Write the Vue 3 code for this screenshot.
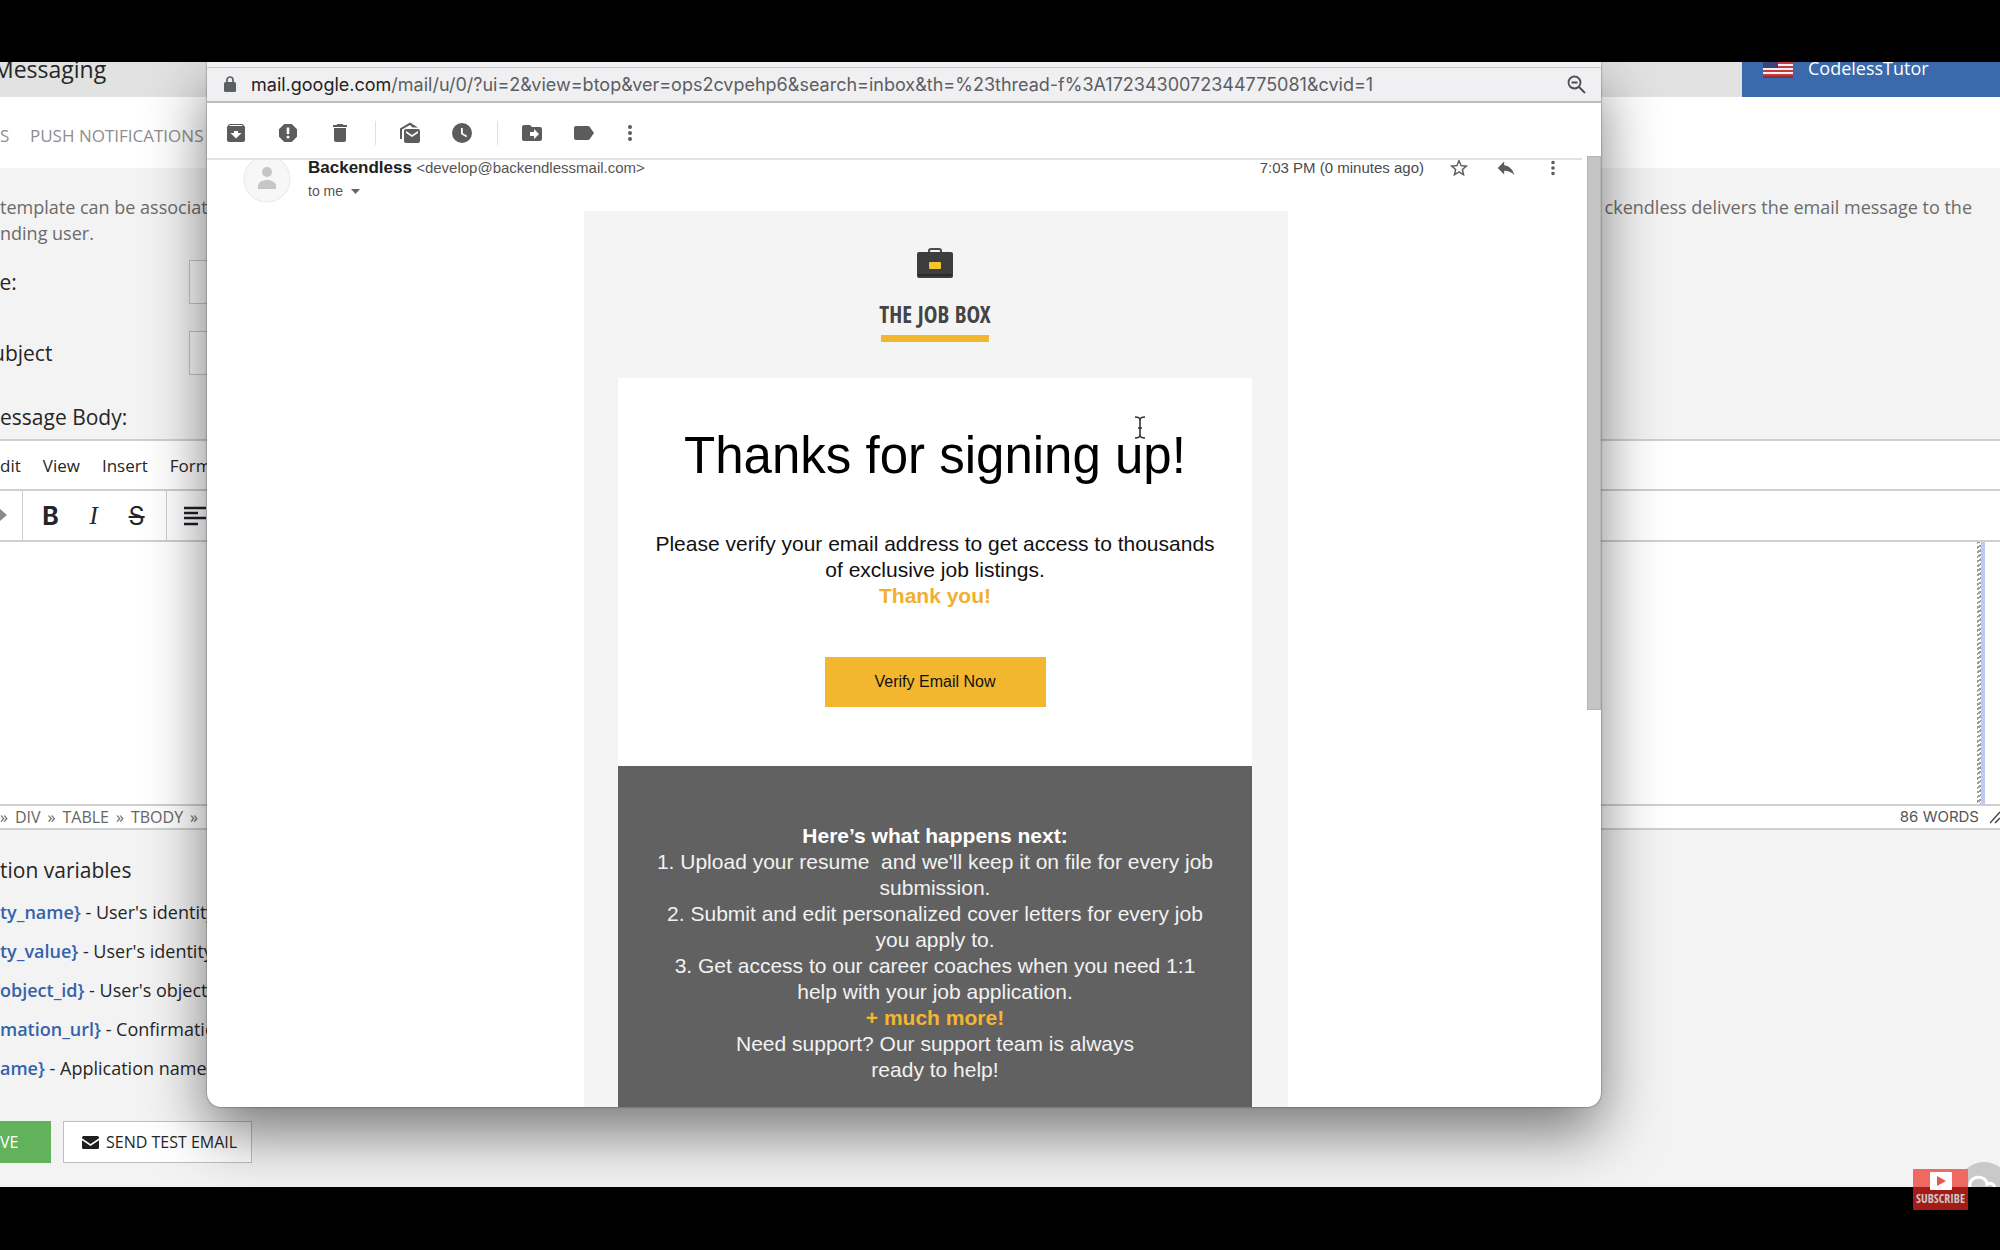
<template>
  <div class="screen">
    <main class="desktop">
      <div class="console">
        <header class="console-head">
          <h1 class="console-title">Messaging</h1>
          <a class="account" href="#">
            <svg class="flag" viewBox="0 0 30 20">
              <rect width="30" height="20" fill="#f4f1f2" />
              <path d="M0 1h30M0 5h30M0 9h30M0 13h30M0 17h30" stroke="#c8383f" stroke-width="2" />
              <rect y="18" width="30" height="2" fill="#8d2d3a" />
              <rect width="15" height="10" fill="#3c4377" />
            </svg>
            <span>CodelessTutor</span>
          </a>
        </header>

        <nav class="tabs">
          <a href="#">S</a>
          <a href="#">PUSH NOTIFICATIONS</a>
        </nav>

        <section class="form">
          <div class="intro">
            <p>template can be associat<br />nding user.</p>
            <p>ckendless delivers the email message to the</p>
          </div>
          <div class="field">
            <label for="template">te:</label>
            <input id="template" type="text" />
          </div>
          <div class="field">
            <label for="subject">ubject</label>
            <input id="subject" type="text" />
          </div>
          <h2 class="body-label">essage Body:</h2>
        </section>

        <section class="editor">
          <div class="menubar">
            <button v-for="m in menus" :key="m" type="button">{{ m }}</button>
          </div>
          <div class="format-bar">
            <div class="group group-undo">
              <button type="button" aria-label="Redo">
                <svg width="8" height="16" viewBox="0 0 8 16"><path d="M0 1l7 6-7 6z" fill="#8a8a8a" /></svg>
              </button>
            </div>
            <div class="group group-style">
              <button type="button" class="bold">B</button>
              <button type="button" class="italic">I</button>
              <button type="button" class="strike">S</button>
            </div>
            <div class="group group-align">
              <button type="button" aria-label="Align left">
                <svg width="24" height="20" viewBox="0 0 24 20">
                  <path d="M1 2h22M1 7h14M1 12h22M1 18h14" stroke="#1c1f27" stroke-width="2.6" />
                </svg>
              </button>
            </div>
          </div>
          <div class="canvas"><div class="guide"></div></div>
          <div class="statusbar">
            <template v-for="p in path" :key="p"><span>»</span><span>{{ p }}</span></template>
            <span>»</span>
            <span class="words">86 WORDS</span>
            <svg width="10" height="14" viewBox="0 0 10 14"><path d="M0 13L10 2M5 13l5-5" stroke="#444" stroke-width="1.5" /></svg>
          </div>
        </section>

        <section class="variables">
          <h2>tion variables</h2>
          <ul>
            <li v-for="v in variables" :key="v.name"><b>{{ v.name }}</b> - {{ v.text }}</li>
          </ul>
        </section>

        <footer class="actions">
          <button type="button" class="save">VE</button>
          <button type="button" class="test">
            <svg width="17" height="13" viewBox="0 0 17 13">
              <path d="M1.5 0h14A1.5 1.5 0 0 1 17 1.5v.8L8.5 8 0 2.300v-.8A1.5 1.5 0 0 1 1.500 0z M0 4.300L8.500 10 17 4.300v7.200a1.500 1.500 0 0 1-1.500 1.500h-14A1.500 1.500 0 0 1 0 11.500z" fill="#1f1f1f" />
            </svg>
            SEND TEST EMAIL
          </button>
        </footer>
      </div>

      <!-- floating mail window -->
      <div class="mail-window">
        <div class="address-bar">
          <svg class="lock" width="12" height="16" viewBox="0 0 12 16">
            <rect y="6" width="12" height="10" rx="1.5" fill="#5c5f63" />
            <path d="M3 7V4a3 3 0 0 1 6 0v3" fill="none" stroke="#5c5f63" stroke-width="1.7" />
          </svg>
          <div class="url"><b>mail.google.com</b>/mail/u/0/?ui=2&amp;view=btop&amp;ver=ops2cvpehp6&amp;search=inbox&amp;th=%23thread-f%3A1723430072344775081&amp;cvid=1</div>
          <button type="button" aria-label="Zoom">
            <svg width="19" height="19" viewBox="0 0 19 19" fill="none" stroke="#4c4f54" stroke-width="1.8">
              <circle cx="7.5" cy="7.5" r="6" />
              <path d="M12 12l6 6M4.500 7.500h6" />
            </svg>
          </button>
        </div>

        <div class="mail-tools">
          <template v-for="(t, i) in tools" :key="i">
            <span v-if="t.sep" class="sep"></span>
            <button v-else type="button" :aria-label="t.label">
              <svg viewBox="0 0 24 24"><path fill-rule="evenodd" :d="t.d" /></svg>
            </button>
          </template>
        </div>

        <div class="mail-scroll">
          <div class="mail-head">
            <svg class="avatar" viewBox="0 0 48 48">
              <circle cx="24" cy="24" r="23" fill="#f7f7f7" stroke="#e6e6e6" />
              <circle cx="24" cy="17" r="5" fill="#c6c6c6" />
              <path d="M15 34v-3c0-4 5-6 9-6s9 2 9 6v3z" fill="#c6c6c6" />
            </svg>
            <div class="sender">
              <div class="from"><b>Backendless</b> <span>&lt;develop@backendlessmail.com&gt;</span></div>
              <div class="to">to me <svg width="9" height="5" viewBox="0 0 9 5"><path d="M0 0h9L4.500 5z" fill="#666" /></svg></div>
            </div>
            <div class="time">7:03 PM (0 minutes ago)</div>
            <div class="head-icons">
              <button v-for="t in headTools" :key="t.label" type="button" :aria-label="t.label">
                <svg viewBox="0 0 24 24"><path fill-rule="evenodd" :d="t.d" /></svg>
              </button>
            </div>
          </div>

          <div class="mail-body">
            <article class="letter">
              <div class="brand">
                <svg width="36" height="30" viewBox="0 0 36 30">
                  <path d="M12 5V3a2 2 0 0 1 2-2h8a2 2 0 0 1 2 2v2" fill="none" stroke="#4a4a4c" stroke-width="2" />
                  <rect y="4" width="36" height="26" rx="2" fill="#3d3d3f" />
                  <path d="M1 27h34" stroke="#2a2a2c" stroke-width="2" />
                  <rect x="12" y="14" width="12" height="7" rx="1" fill="#f0c62c" />
                </svg>
                <div class="brand-name">THE JOB BOX</div>
                <div class="brand-line"></div>
              </div>
              <div class="card">
                <h2>Thanks for signing up!</h2>
                <p>Please verify your email address to get access to thousands<br />of exclusive job listings.</p>
                <strong>Thank you!</strong>
                <a class="verify" href="#">Verify Email Now</a>
              </div>
              <div class="next">
                <strong>Here’s what happens next:</strong>
                <p v-for="line in steps" :key="line">{{ line }}</p>
                <strong class="more">+ much more!</strong>
                <p>Need support? Our support team is always</p>
                <p>ready to help!</p>
              </div>
            </article>
          </div>
        </div>
        <div class="scrollbar"></div>
        <svg class="cursor" width="12" height="23" viewBox="0 0 12 23">
          <path d="M1 1c3 0 5 1 5 3v15c0 2-2 3-5 3M11 1c-3 0-5 1-5 3M11 22c-3 0-5-1-5-3M4 12h4" fill="none" stroke="#333" stroke-width="1.6" />
        </svg>
      </div>

      <svg class="chat" width="52" height="52" viewBox="0 0 52 52">
        <circle cx="26" cy="26" r="26" fill="#c9c9c9" />
        <path d="M12 25c-2-12 16-13 17-3 3-2 8 0 8 5" fill="none" stroke="#fff" stroke-width="3" />
      </svg>
    </main>

    <button type="button" class="subscribe">
      <svg width="22" height="18" viewBox="0 0 22 18">
        <rect width="22" height="18" rx="1" fill="#fff" />
        <path d="M7 4l9 5-9 5z" fill="#e8564f" />
      </svg>
      <span>SUBSCRIBE</span>
    </button>
  </div>
</template>

<script setup>
const menus = ['dit', 'View', 'Insert', 'Form']

const path = ['DIV', 'TABLE', 'TBODY']

const variables = [
  { name: 'ty_name}', text: "User's identity" },
  { name: 'ty_value}', text: "User's identity" },
  { name: 'object_id}', text: "User's object" },
  { name: 'mation_url}', text: 'Confirmation' },
  { name: 'ame}', text: 'Application name' }
]

const steps = [
  "1. Upload your resume\u00a0 and we'll keep it on file for every job",
  'submission.',
  '2. Submit and edit personalized cover letters for every job',
  'you apply to.',
  '3. Get access to our career coaches when you need 1:1',
  'help with your job application.'
]

const dots = 'M12 8a2 2 0 1 0 0-4 2 2 0 0 0 0 4zm0 2a2 2 0 1 0 0 4 2 2 0 0 0 0-4zm0 6a2 2 0 1 0 0 4 2 2 0 0 0 0-4z'

const tools = [
  { label: 'Archive', d: 'M20.540 5.230l-1.390-1.680A1.450 1.450 0 0 0 18 3H6c-.47 0-.88.210-1.160.550L3.460 5.230C3.170 5.570 3 6.020 3 6.500V19a2 2 0 0 0 2 2h14a2 2 0 0 0 2-2V6.500c0-.48-.17-.93-.46-1.270zM12 17.500L6.500 12H10v-2h4v2h3.500L12 17.500zM5.120 5l.81-1h12l.94 1H5.120z' },
  { label: 'Report spam', d: 'M15.730 3H8.270L3 8.270v7.460L8.270 21h7.460L21 15.730V8.270L15.730 3zM12 17.500a1.500 1.500 0 1 1 0-3 1.500 1.500 0 0 1 0 3zm1.300-4.500h-2.600V6.500h2.600V13z' },
  { label: 'Delete', d: 'M6 19a2 2 0 0 0 2 2h8a2 2 0 0 0 2-2V7H6v12zM19 4h-3.500l-1-1h-5l-1 1H5v2h14V4z' },
  { sep: true },
  { label: 'Mark as unread', d: 'M20 8H8a2 2 0 0 0-2 2v10c0 1.100.9 2 2 2h12a2 2 0 0 0 2-2V10a2 2 0 0 0-2-2zm0 4l-6 4-6-4v-2l6 4 6-4v2zM4 18H2V7.500L12 1.500 20 6.500H14.500L12 4 4 8.600z' },
  { label: 'Snooze', d: 'M12 2a10 10 0 1 0 0 20 10 10 0 0 0 0-20zm4.200 14.200L11 13V7h1.800v5.200l4.400 2.600-1 1.400z' },
  { sep: true },
  { label: 'Move to', d: 'M20 6h-8l-2-2H4a2 2 0 0 0-2 2v12c0 1.100.9 2 2 2h16a2 2 0 0 0 2-2V8a2 2 0 0 0-2-2zm-6 12v-3h-4v-4h4V8l5 5-5 5z' },
  { label: 'Labels', d: 'M17.630 5.840C17.270 5.330 16.670 5 16 5H4a2 2 0 0 0-2 2v10c0 1.100.9 2 2 2h12c.67 0 1.270-.33 1.630-.84L22 12l-4.370-6.160z' },
  { label: 'More', d: dots }
]

const headTools = [
  { label: 'Star', d: 'M22 9.240l-7.190-.62L12 2 9.190 8.630 2 9.240l5.460 4.730L5.820 21 12 17.270 18.180 21l-1.630-7.030L22 9.240zM12 15.400l-3.760 2.270 1-4.280-3.320-2.880 4.380-.38L12 6.100l1.710 4.040 4.380.38-3.320 2.880 1 4.280L12 15.400z' },
  { label: 'Reply', d: 'M10 9V5l-7 7 7 7v-4.100c5 0 8.500 1.600 11 5.100-1-5-4-10-11-11z' },
  { label: 'More options', d: dots }
]
</script>

<style>
body {
  margin: 0;
  background: #000;
}
</style>

<style scoped>
* {
  box-sizing: border-box;
}

h1, h2, p, ul {
  margin: 0;
  padding: 0;
  font-weight: 400;
}

button {
  border: 0;
  padding: 0;
  background: none;
  color: inherit;
  font: inherit;
}

a {
  color: inherit;
  text-decoration: none;
}

svg {
  display: block;
  flex-shrink: 0;
}

.screen {
  position: relative;
  padding: 62px 0 63px;
  background: #000;
  font-family: "Open Sans", "Noto Sans", sans-serif;
  color: #262626;
}

.desktop {
  position: relative;
  overflow: hidden;
  background: #f3f3f3;
}

.console-head {
  display: flex;
  justify-content: space-between;
  height: 35px;
  background: #e2e2e2;
  overflow: hidden;
}

.console-title {
  margin-left: -7px;
  font-size: 23px;
  line-height: 14px;
}

.account {
  display: flex;
  gap: 15px;
  width: 258px;
  padding-left: 21px;
  background: #3a69ac;
  color: #fff;
  font-size: 18px;
  line-height: 12px;
}

.flag {
  width: 30px;
  height: 20px;
  margin-top: -4px;
}

.tabs {
  display: flex;
  gap: 24px;
  align-items: center;
  height: 71px;
  padding-top: 6px;
  padding-left: 0;
  background: #fff;
  color: #8e8e8e;
  font-size: 17px;
}

.tabs a:first-child {
  width: 6px;
}

.form {
  height: 271px;
  padding-top: 26px;
}

.intro {
  display: flex;
  justify-content: space-between;
  height: 66px;
  padding-right: 28px;
  color: #6b6b6b;
  font-size: 18px;
  line-height: 26px;
}

.field {
  display: flex;
  align-items: center;
  height: 44px;
  margin-bottom: 27px;
  font-size: 21px;
}

.field label {
  width: 189px;
  text-indent: -8px;
}

.field input {
  width: 60%;
  height: 44px;
  border: 1px solid #c4c4c4;
  background: #f8f8f8;
}

.body-label {
  font-size: 21px;
  line-height: 30px;
}

.editor {
  border-top: 2px solid #cfcfcf;
  border-bottom: 2px solid #cfcfcf;
  background: #fff;
}

.menubar {
  display: flex;
  gap: 22px;
  height: 48px;
  font-size: 17px;
}

.format-bar {
  display: flex;
  height: 53px;
  border-top: 2px solid #cfcfcf;
  border-bottom: 2px solid #cfcfcf;
}

.group {
  display: flex;
  align-items: center;
  border-right: 1px solid #cfcfcf;
}

.group-undo {
  width: 23px;
}

.group-style {
  width: 144px;
  justify-content: space-around;
  padding: 0 6px 0 4px;
  font-size: 25px;
}

.group-align {
  padding-left: 16px;
  border-right: 0;
}

.bold {
  font-family: Inter, sans-serif;
  font-weight: 700;
}

.italic {
  font-family: "Liberation Serif", serif;
  font-style: italic;
}

.strike {
  font-family: Inter, sans-serif;
  text-decoration: line-through;
}

.canvas {
  display: flex;
  justify-content: flex-end;
  height: 262px;
  padding-right: 15px;
}

.guide {
  width: 8px;
  border-right: 4px solid #b9cdf3;
  background: repeating-linear-gradient(150deg, #9c9c9c 0 2px, #fff 2px 4px);
}

.statusbar {
  display: flex;
  align-items: center;
  gap: 7px;
  height: 24px;
  border-top: 2px solid #cfcfcf;
  color: #666;
  font-size: 16px;
  line-height: 20px;
}

.words {
  margin-left: auto;
  margin-right: 4px;
  font-family: Inter, sans-serif;
  font-size: 15px;
  color: #555;
}

.variables {
  padding-top: 24px;
}

.variables h2 {
  font-size: 21px;
  line-height: 32px;
}

.variables ul {
  margin-top: 7px;
  list-style: none;
  font-size: 18px;
  line-height: 39px;
}

.variables b {
  color: #3363ab;
  font-weight: 600;
}

.actions {
  display: flex;
  gap: 12px;
  height: 99px;
  padding-top: 33px;
  font-size: 16px;
}

.actions button {
  height: 42px;
}

.save {
  width: 51px;
  background: #62b15b;
  color: #fff;
  text-align: left;
}

.test {
  display: flex;
  align-items: center;
  gap: 7px;
  padding: 0 14px 0 18px;
  border: 1px solid #bfbfbf;
  background: #fff;
}

.mail-window {
  position: absolute;
  top: 0;
  right: 399px;
  bottom: 80px;
  left: 207px;
  display: flex;
  flex-direction: column;
  overflow: hidden;
  border-radius: 0 0 14px 14px;
  background: #fff;
  box-shadow: 0 0 2px rgba(0, 0, 0, 0.6), 0 26px 60px rgba(0, 0, 0, 0.5);
  font-family: "Liberation Sans", Arial, sans-serif;
}

.address-bar {
  display: flex;
  flex-shrink: 0;
  align-items: center;
  height: 41px;
  padding: 0 15px 0 17px;
  border-top: 5px solid #f1f1f1;
  border-bottom: 2px solid #bdbdc0;
  background: #f0f0f3;
  box-shadow: inset 0 1px #c3c3c5;
  color: #5b5e62;
  font-family: Inter, Roboto, sans-serif;
  font-size: 18px;
}

.url {
  flex: 1;
  margin-left: 15px;
  white-space: nowrap;
}

.url b {
  color: #222;
  font-weight: 400;
}

.mail-tools {
  display: flex;
  flex-shrink: 0;
  align-items: center;
  height: 57px;
  padding-left: 17px;
  padding-top: 4px;
  margin-right: 19px;
  border-bottom: 2px solid #e3e3e3;
}

.mail-tools button {
  width: 24px;
  margin-right: 28px;
}

.mail-tools button:last-child {
  margin-left: -6px;
}

.mail-tools .sep {
  width: 1px;
  height: 24px;
  margin: 0 22px 0 -5px;
  background: #e0e0e0;
}

.mail-tools svg,
.head-icons svg {
  width: 24px;
  height: 24px;
  fill: #5c5c5c;
}

.mail-scroll {
  flex: 1;
  min-height: 0;
  overflow: hidden;
  padding: 0 37px 0 36px;
}

.mail-head {
  display: flex;
  height: 51px;
}

.avatar {
  width: 48px;
  height: 48px;
  margin-top: -5px;
}

.sender {
  margin-left: 17px;
  font-size: 15px;
  color: #555;
}

.from {
  line-height: 16px;
}

.from b {
  color: #202020;
  font-size: 17px;
}

.to {
  display: flex;
  align-items: center;
  gap: 8px;
  margin-top: 6px;
  font-size: 14px;
  line-height: 18px;
}

.time {
  margin-left: auto;
  font-size: 15px;
  line-height: 16px;
  color: #4b4b4b;
}

.head-icons {
  display: flex;
  gap: 25px;
  height: 24px;
  margin: -4px 0 0 24px;
}

.head-icons svg {
  width: 22px;
  height: 22px;
}

.mail-body {
  padding-left: 65px;
}

.letter {
  max-width: 704px;
  margin: 0 auto;
  padding: 0 36px 0 34px;
  background: #f4f4f4;
  text-align: center;
  font-size: 21px;
  line-height: 26px;
}

.brand {
  display: flex;
  flex-direction: column;
  align-items: center;
  height: 167px;
  padding-top: 37px;
}

.brand-name {
  margin-top: 23px;
  font-family: "Liberation Sans Narrow", "Open Sans Condensed", "Liberation Sans", sans-serif;
  font-size: 23px;
  font-weight: 700;
  line-height: 26px;
  color: #444;
}

.brand-line {
  width: 108px;
  height: 7px;
  margin-top: 8px;
  background: #f3b72f;
}

.card {
  display: flex;
  flex-direction: column;
  align-items: center;
  height: 388px;
  padding-top: 48px;
  background: #fff;
  color: #111;
}

.card h2 {
  font-size: 51px;
  line-height: 60px;
  color: #000;
}

.card p {
  margin-top: 45px;
}

.card strong {
  color: #f0b02d;
}

.verify {
  width: 221px;
  margin-top: 48px;
  background: #f3b72f;
  font-size: 16px;
  line-height: 50px;
}

.next {
  padding: 57px 0 60px;
  background: #616161;
  color: #f2f2f2;
}

.next strong {
  display: block;
  color: #fff;
}

.next .more {
  color: #f3b72f;
}

.scrollbar {
  position: absolute;
  top: 94px;
  right: 0;
  width: 14px;
  height: 554px;
  border: 1px solid #b5b5b5;
  background: #c5c5c5;
}

.cursor {
  position: absolute;
  top: 354px;
  left: 927px;
}

.chat {
  position: absolute;
  right: -10px;
  bottom: -27px;
}

.subscribe {
  position: absolute;
  right: 32px;
  bottom: 40px;
  display: flex;
  flex-direction: column;
  align-items: center;
  width: 55px;
  height: 41px;
  padding-top: 3px;
  border-radius: 1px;
  background: linear-gradient(#ed6962 0 18px, #a31c18 18px);
  color: #c9c9c9;
  font-family: "Open Sans Condensed", "Liberation Sans Narrow", sans-serif;
  font-size: 12px;
  font-weight: 700;
  line-height: 18px;
}
</style>
